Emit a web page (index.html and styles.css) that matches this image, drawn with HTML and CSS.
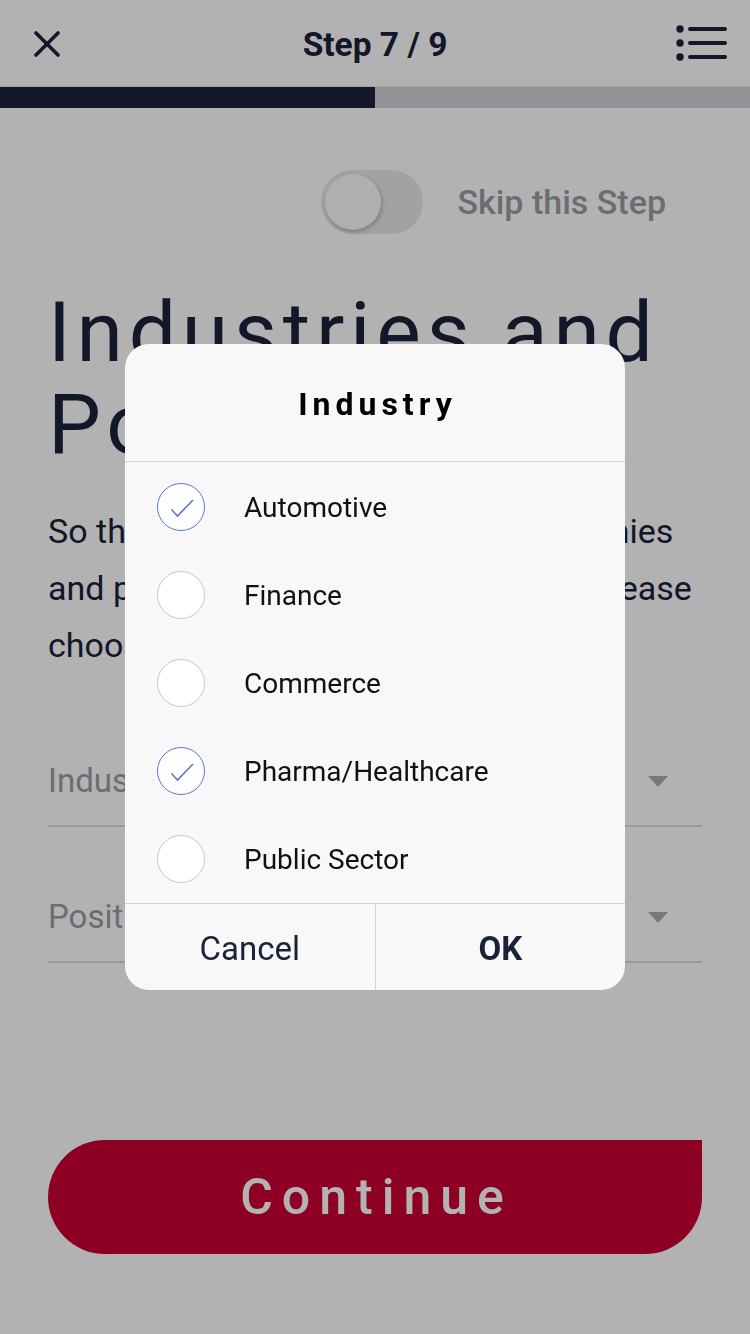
FILE: index.html
```html
<!DOCTYPE html>
<html lang="en">
<head>
<meta charset="utf-8">
<title>Step 7 / 9</title>
<link rel="stylesheet" href="styles.css">
</head>
<body>
<div class="screen">
  <header class="topbar">
    <button class="icon-btn close-btn" aria-label="Close">
      <svg width="26" height="26" viewBox="0 0 26 26"><path d="M2 2 L24 24 M24 2 L2 24" stroke="#1a223b" stroke-width="3.6" stroke-linecap="round" fill="none"/></svg>
    </button>
    <h2 class="step">Step 7 / 9</h2>
    <button class="icon-btn menu-btn" aria-label="Steps">
      <svg width="52" height="36" viewBox="0 0 52 36">
        <circle cx="5" cy="4" r="3.7" fill="#1a223b"/>
        <circle cx="5" cy="18" r="3.7" fill="#1a223b"/>
        <circle cx="5" cy="32" r="3.7" fill="#1a223b"/>
        <path d="M15 4 H50 M15 18 H50 M15 32 H50" stroke="#1a223b" stroke-width="4" stroke-linecap="round" fill="none"/>
      </svg>
    </button>
  </header>
  <div class="progress"><div class="progress-fill" style="width:50%"></div></div>

  <main class="content">
    <div class="skip-row">
      <span class="switch"><span class="thumb"></span></span>
      <span class="skip-label">Skip this Step</span>
    </div>
    <h1 class="title">Industries and Positions</h1>
    <p class="intro">So that we can show the ideal companies<br>and positions that suit you the best, please<br>choose your preferred industries.</p>

    <div class="field field-first">
      <span class="field-label">Industry</span>
      <span class="caret"></span>
    </div>
    <div class="field">
      <span class="field-label">Position</span>
      <span class="caret"></span>
    </div>

    <button class="continue">Continue</button>
  </main>
</div>

<div class="overlay">
  <div class="dialog">
    <h3 class="dialog-title">Industry</h3>
    <ul class="options">
      <li class="option">
        <span class="radio checked"><svg width="48" height="48" viewBox="0 0 48 48"><polyline points="14.5,26.5 20.5,33 36,17" fill="none" stroke="#5b79d0" stroke-width="1.6"/></svg></span>
        <span class="option-label">Automotive</span>
      </li>
      <li class="option">
        <span class="radio"></span>
        <span class="option-label">Finance</span>
      </li>
      <li class="option">
        <span class="radio"></span>
        <span class="option-label">Commerce</span>
      </li>
      <li class="option">
        <span class="radio checked"><svg width="48" height="48" viewBox="0 0 48 48"><polyline points="14.5,26.5 20.5,33 36,17" fill="none" stroke="#5b79d0" stroke-width="1.6"/></svg></span>
        <span class="option-label">Pharma/Healthcare</span>
      </li>
      <li class="option">
        <span class="radio"></span>
        <span class="option-label">Public Sector</span>
      </li>
    </ul>
    <div class="dialog-actions">
      <button class="action cancel">Cancel</button>
      <button class="action ok">OK</button>
    </div>
  </div>
</div>
</body>
</html>
```

FILE: styles.css
```css
* { box-sizing: border-box; }

html, body {
  margin: 0;
  padding: 0;
}

body {
  width: 750px;
  height: 1334px;
  background: #ffffff;
  font-family: Roboto, "Liberation Sans", sans-serif;
  color: #1a223b;
  overflow: hidden;
}

.screen {
  width: 750px;
  height: 1334px;
}

.topbar {
  height: 87px;
  display: grid;
  grid-template-columns: 1fr auto 1fr;
  align-items: center;
  padding: 0 23px;
  border-bottom: 1px solid #e8e8ea;
}

.icon-btn {
  border: 0;
  background: none;
  padding: 0;
  margin: 0;
  display: flex;
  align-items: center;
  justify-content: center;
}

.close-btn { width: 26px; height: 26px; margin: 2px 0 0 11px; justify-self: start; }
.menu-btn { width: 52px; height: 36px; justify-self: end; }

.step {
  margin: 2px 0 0;
  font-size: 33.5px;
  font-weight: 700;
  color: #1a223b;
}

.progress {
  height: 21px;
  background: #d2d2d8;
}

.progress-fill {
  height: 100%;
  background: #1a223b;
}

.content {
  padding: 0 48px;
  display: flex;
  flex-direction: column;
}

.skip-row {
  margin-top: 62px;
  display: flex;
  align-items: center;
  justify-content: flex-end;
  gap: 34px;
  padding-right: 36px;
}

.switch {
  width: 102px;
  height: 64px;
  border-radius: 32px;
  background: #e8e8e8;
  display: flex;
  align-items: center;
  padding-left: 4px;
}

.thumb {
  width: 56px;
  height: 56px;
  border-radius: 50%;
  background: #fbfbfb;
  box-shadow: 1px 2px 4px rgba(0,0,0,0.25);
}

.skip-label {
  font-size: 34px;
  font-weight: 500;
  color: #9a9ca4;
}

.title {
  margin: 53px 0 0;
  font-size: 84px;
  line-height: 92px;
  font-weight: 400;
  letter-spacing: 5.7px;
  color: #1a223b;
}

.intro {
  margin: 32px 0 0;
  font-size: 34px;
  line-height: 57px;
  color: #1a223b;
  white-space: nowrap;
}

.field {
  display: flex;
  align-items: center;
  justify-content: space-between;
  padding-bottom: 24px;
  border-bottom: 2px solid #dcdcdc;
  margin-top: 70px;
}

.field-first { margin-top: 87px; }

.field-label {
  font-size: 33px;
  line-height: 40px;
  color: #9a9ca4;
}

.caret {
  width: 0;
  height: 0;
  border-left: 10.5px solid transparent;
  border-right: 10.5px solid transparent;
  border-top: 11px solid #acacac;
  margin-right: 34px;
}

.continue {
  margin-top: 177px;
  height: 114px;
  border: 0;
  background: #cc0033;
  color: #ffffff;
  border-radius: 57px 0 57px 57px;
  font-family: Roboto, "Liberation Sans", sans-serif;
  font-size: 50px;
  font-weight: 500;
  letter-spacing: 9px;
  padding-left: 9px;
}

.overlay {
  position: fixed;
  inset: 0;
  background: rgba(0, 0, 0, 0.3);
  display: flex;
  align-items: center;
  justify-content: center;
}

.dialog {
  width: 500px;
  height: 646px;
  background: #f8f8f8;
  border-radius: 24px;
  display: flex;
  flex-direction: column;
  overflow: hidden;
}

.dialog-title {
  margin: 0;
  height: 118px;
  padding-top: 3px;
  border-bottom: 1px solid #d2d2d2;
  display: flex;
  align-items: center;
  justify-content: center;
  font-size: 32px;
  font-weight: 700;
  letter-spacing: 5px;
  padding-left: 5px;
  color: #000000;
}

.options {
  list-style: none;
  margin: 0;
  padding: 1px 0 0;
}

.option {
  height: 88px;
  display: flex;
  align-items: center;
  padding-left: 32px;
  gap: 39px;
}

.radio {
  width: 48px;
  height: 48px;
  border-radius: 50%;
  border: 1.5px solid #c9c9c9;
  background: #ffffff;
  position: relative;
  flex: none;
}

.radio.checked {
  border-color: #5b79d0;
}

.radio svg {
  position: absolute;
  left: -1.5px;
  top: -1.5px;
}

.option-label {
  font-size: 28px;
  color: #111111;
}

.dialog-actions {
  flex: 1;
  display: flex;
  border-top: 1px solid #d2d2d2;
}

.action {
  flex: 1;
  border: 0;
  background: none;
  font-family: Roboto, "Liberation Sans", sans-serif;
  font-size: 33px;
  color: #1a2238;
  padding: 2px 0 0;
}

.action.ok {
  font-weight: 700;
  border-left: 1px solid #d2d2d2;
}
```
